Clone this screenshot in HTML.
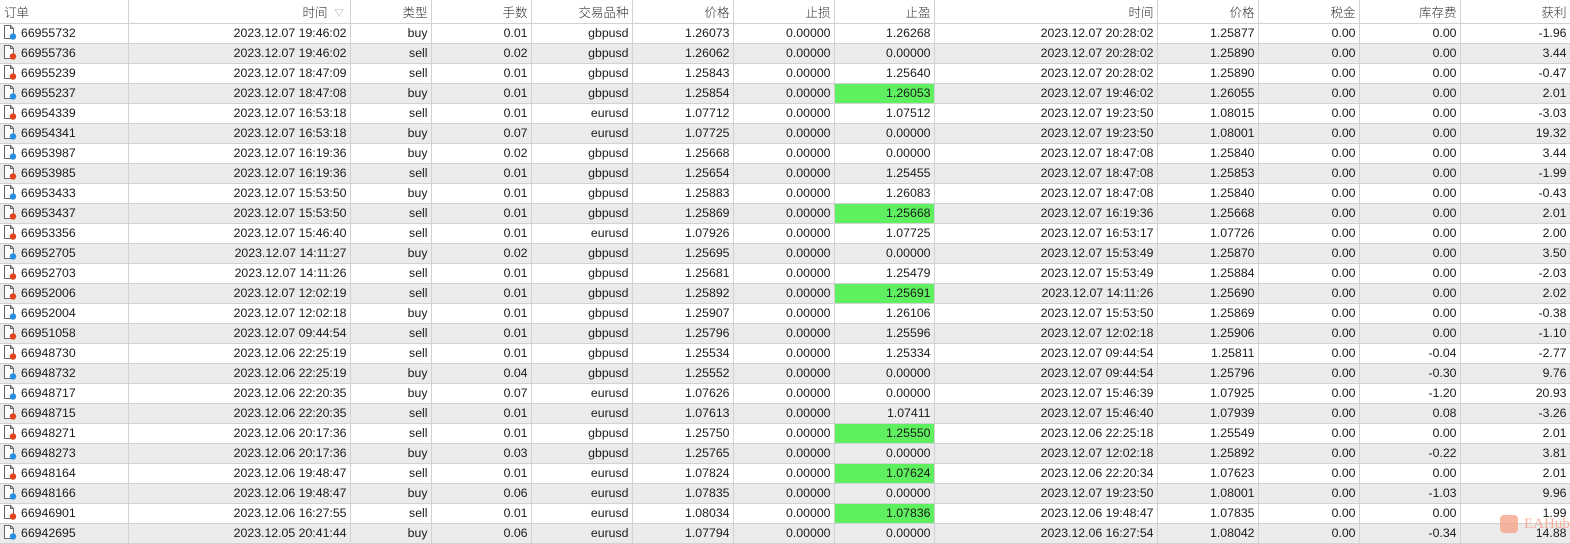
<!DOCTYPE html>
<html><head><meta charset="utf-8"><style>
*{margin:0;padding:0;box-sizing:border-box}
body{width:1570px;height:542px;overflow:hidden;background:#fff;font-family:"Liberation Sans","Noto Sans CJK SC",sans-serif;font-size:12.3px;color:#1a1a1a}
table{border-collapse:collapse;table-layout:fixed;width:1570px}
td,th{height:20px;border-right:1px solid #d2d2d2;border-bottom:1px solid #d2d2d2;text-align:right;padding:0 3px 0 2px;white-space:nowrap;overflow:hidden;font-weight:normal;line-height:19px}
th{height:23px;font-family:"Noto Sans CJK SC","Liberation Sans",sans-serif;font-size:12.5px;font-weight:300;color:#333}
tbody tr:nth-child(even) td{background:#ebebeb}
td:first-child,th:first-child{text-align:left}
.g{background:#5ef05e!important}
.ic{display:inline-block;vertical-align:-3px;margin:0 4px 0 1px}
</style></head><body>
<table>
<colgroup><col style="width:128px"><col style="width:222px"><col style="width:81px"><col style="width:100px"><col style="width:101px"><col style="width:101px"><col style="width:101px"><col style="width:100px"><col style="width:223px"><col style="width:101px"><col style="width:101px"><col style="width:101px"><col style="width:110px"></colgroup>
<thead><tr><th style="padding-left:4px">订单</th><th style="padding-right:22px;position:relative">时间<span style="position:absolute;right:6px;top:3px;font-size:9px;color:#888">▽</span></th><th>类型</th><th>手数</th><th>交易品种</th><th>价格</th><th>止损</th><th>止盈</th><th>时间</th><th>价格</th><th>税金</th><th>库存费</th><th>获利</th></tr></thead>
<tbody id="b"></tbody>
</table>
<div style="position:absolute;left:1500px;top:515px;width:18px;height:18px;background:#f6a58a;border-radius:4px;opacity:.8"></div>
<div style="position:absolute;left:1524px;top:516px;color:#f6a58a;font-family:'Liberation Serif',serif;font-size:15px;opacity:.85">EAHub</div>
<script>
var d=`66955732|2023.12.07 19:46:02|buy|0.01|gbpusd|1.26073|1.26268|2023.12.07 20:28:02|1.25877|0.00|-1.96
66955736|2023.12.07 19:46:02|sell|0.02|gbpusd|1.26062|0.00000|2023.12.07 20:28:02|1.25890|0.00|3.44
66955239|2023.12.07 18:47:09|sell|0.01|gbpusd|1.25843|1.25640|2023.12.07 20:28:02|1.25890|0.00|-0.47
66955237|2023.12.07 18:47:08|buy|0.01|gbpusd|1.25854|*1.26053|2023.12.07 19:46:02|1.26055|0.00|2.01
66954339|2023.12.07 16:53:18|sell|0.01|eurusd|1.07712|1.07512|2023.12.07 19:23:50|1.08015|0.00|-3.03
66954341|2023.12.07 16:53:18|buy|0.07|eurusd|1.07725|0.00000|2023.12.07 19:23:50|1.08001|0.00|19.32
66953987|2023.12.07 16:19:36|buy|0.02|gbpusd|1.25668|0.00000|2023.12.07 18:47:08|1.25840|0.00|3.44
66953985|2023.12.07 16:19:36|sell|0.01|gbpusd|1.25654|1.25455|2023.12.07 18:47:08|1.25853|0.00|-1.99
66953433|2023.12.07 15:53:50|buy|0.01|gbpusd|1.25883|1.26083|2023.12.07 18:47:08|1.25840|0.00|-0.43
66953437|2023.12.07 15:53:50|sell|0.01|gbpusd|1.25869|*1.25668|2023.12.07 16:19:36|1.25668|0.00|2.01
66953356|2023.12.07 15:46:40|sell|0.01|eurusd|1.07926|1.07725|2023.12.07 16:53:17|1.07726|0.00|2.00
66952705|2023.12.07 14:11:27|buy|0.02|gbpusd|1.25695|0.00000|2023.12.07 15:53:49|1.25870|0.00|3.50
66952703|2023.12.07 14:11:26|sell|0.01|gbpusd|1.25681|1.25479|2023.12.07 15:53:49|1.25884|0.00|-2.03
66952006|2023.12.07 12:02:19|sell|0.01|gbpusd|1.25892|*1.25691|2023.12.07 14:11:26|1.25690|0.00|2.02
66952004|2023.12.07 12:02:18|buy|0.01|gbpusd|1.25907|1.26106|2023.12.07 15:53:50|1.25869|0.00|-0.38
66951058|2023.12.07 09:44:54|sell|0.01|gbpusd|1.25796|1.25596|2023.12.07 12:02:18|1.25906|0.00|-1.10
66948730|2023.12.06 22:25:19|sell|0.01|gbpusd|1.25534|1.25334|2023.12.07 09:44:54|1.25811|-0.04|-2.77
66948732|2023.12.06 22:25:19|buy|0.04|gbpusd|1.25552|0.00000|2023.12.07 09:44:54|1.25796|-0.30|9.76
66948717|2023.12.06 22:20:35|buy|0.07|eurusd|1.07626|0.00000|2023.12.07 15:46:39|1.07925|-1.20|20.93
66948715|2023.12.06 22:20:35|sell|0.01|eurusd|1.07613|1.07411|2023.12.07 15:46:40|1.07939|0.08|-3.26
66948271|2023.12.06 20:17:36|sell|0.01|gbpusd|1.25750|*1.25550|2023.12.06 22:25:18|1.25549|0.00|2.01
66948273|2023.12.06 20:17:36|buy|0.03|gbpusd|1.25765|0.00000|2023.12.07 12:02:18|1.25892|-0.22|3.81
66948164|2023.12.06 19:48:47|sell|0.01|eurusd|1.07824|*1.07624|2023.12.06 22:20:34|1.07623|0.00|2.01
66948166|2023.12.06 19:48:47|buy|0.06|eurusd|1.07835|0.00000|2023.12.07 19:23:50|1.08001|-1.03|9.96
66946901|2023.12.06 16:27:55|sell|0.01|eurusd|1.08034|*1.07836|2023.12.06 19:48:47|1.07835|0.00|1.99
66942695|2023.12.05 20:41:44|buy|0.06|eurusd|1.07794|0.00000|2023.12.06 16:27:54|1.08042|-0.34|14.88`.split('\n');
var h='';
d.forEach(function(l){var c=l.split('|');var col=c[2]=='buy'?'#2a8ee0':'#e0461e';
var ic='<svg class="ic" width="14" height="15" viewBox="0 0 14 15"><path d="M1.5 .5h6l3 3v10h-9z" fill="#fff" stroke="#666"/><path d="M7.5 .5v3h3" fill="none" stroke="#666"/><circle cx="10" cy="11.5" r="3.2" fill="'+col+'"/></svg>';
var g=c[6][0]=='*';var tp=g?c[6].slice(1):c[6];
h+='<tr><td>'+ic+c[0]+'</td><td>'+c[1]+'</td><td>'+c[2]+'</td><td>'+c[3]+'</td><td>'+c[4]+'</td><td>'+c[5]+'</td><td>0.00000</td><td'+(g?' class="g"':'')+'>'+tp+'</td><td>'+c[7]+'</td><td>'+c[8]+'</td><td>0.00</td><td>'+c[9]+'</td><td>'+c[10]+'</td></tr>';});
document.getElementById('b').innerHTML=h;
</script>
</body></html>
